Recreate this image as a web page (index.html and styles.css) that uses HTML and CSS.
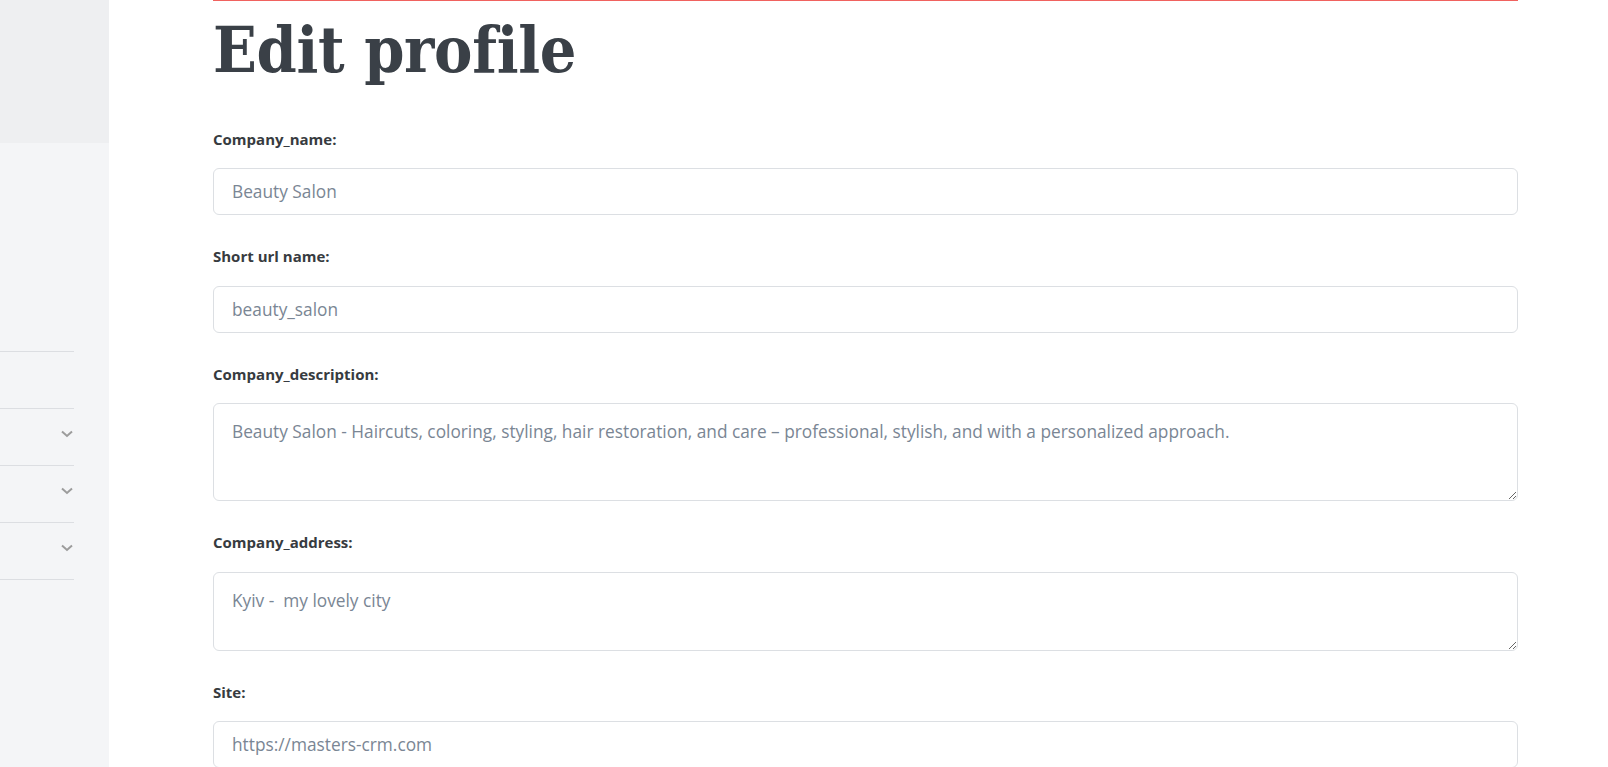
FILE: index.html
```html
<!DOCTYPE html>
<html>
<head>
    <meta charset="utf-8" />
    <title>Edit profile</title>
    <link rel="stylesheet" href="styles.css">
</head>
<body>
    <div class="layout">
        <aside class="sidebar">
            <div class="sidebar-top"></div>
            <ul class="nav">
                <li class="nav-item"></li>
                <li class="nav-item">
                    <svg class="chevron" width="12" height="8" viewBox="0 0 12 8"><path d="M1 1.5 L6 6 L11 1.5" /></svg>
                </li>
                <li class="nav-item">
                    <svg class="chevron" width="12" height="8" viewBox="0 0 12 8"><path d="M1 1.5 L6 6 L11 1.5" /></svg>
                </li>
                <li class="nav-item">
                    <svg class="chevron" width="12" height="8" viewBox="0 0 12 8"><path d="M1 1.5 L6 6 L11 1.5" /></svg>
                </li>
            </ul>
        </aside>

        <main class="main">
            <div class="content">
                <h1 class="title">Edit profile</h1>

                <form class="profile-form">
                    <div class="field">
                        <label class="field-label">Company_name:</label>
                        <input class="field-input" type="text" value="Beauty Salon" />
                    </div>
                    <div class="field">
                        <label class="field-label">Short url name:</label>
                        <input class="field-input" type="text" value="beauty_salon" />
                    </div>
                    <div class="field">
                        <label class="field-label">Company_description:</label>
                        <textarea class="field-input field-area tall">Beauty Salon - Haircuts, coloring, styling, hair restoration, and care – professional, stylish, and with a personalized approach.</textarea>
                    </div>
                    <div class="field">
                        <label class="field-label">Company_address:</label>
                        <textarea class="field-input field-area">Kyiv -  my lovely city</textarea>
                    </div>
                    <div class="field">
                        <label class="field-label">Site:</label>
                        <input class="field-input" type="text" value="https://masters-crm.com" />
                    </div>
                </form>
            </div>
        </main>
    </div>
</body>
</html>
```

FILE: styles.css
```css
html, body
{
    margin: 0;
    height: 100%;
    overflow: hidden;
}

body
{
    font-family: 'Open Sans', sans-serif;
    background: #ffffff;
}

.layout
{
    display: flex;
    height: 100%;
}

.sidebar
{
    width: 109px;
    flex-shrink: 0;
    background: #f4f5f7;
}

.sidebar-top
{
    height: 143px;
    background: #eeeff1;
}

.nav
{
    list-style: none;
    margin: 208px 0 0 0;
    padding: 0;
    width: 74px;
    border-bottom: 1px solid #dcdee2;
}

.nav-item
{
    height: 56px;
    border-top: 1px solid #dcdee2;
    display: flex;
    align-items: center;
    justify-content: flex-end;
    padding-right: 1px;
}

    .nav-item .chevron
    {
        margin-bottom: 6px;
    }

    .nav-item .chevron path
    {
        fill: none;
        stroke: #9c9c9c;
        stroke-width: 2;
    }

.main
{
    flex: 1;
    padding-left: 104px;
}

.content
{
    width: 1305px;
    border-top: 1px solid #f0625f;
}

.title
{
    margin: 11px 0 0 0;
    font: bold 64px/1.2 'DejaVu Serif Condensed', 'DejaVu Serif', serif;
    letter-spacing: -0.3px;
    color: #3a4047;
}

.profile-form
{
    margin-top: 39px;
}

.field
{
    margin-bottom: 30px;
}

.field-label
{
    display: block;
    margin-bottom: 18px;
    font-size: 15px;
    line-height: 1.5;
    font-weight: 700;
    color: #373b40;
}

.field-input
{
    display: block;
    box-sizing: border-box;
    width: 100%;
    height: 47px;
    margin: 0;
    padding: 0 18px;
    border: 1px solid #dcdfe3;
    border-radius: 6px;
    font-family: 'Open Sans', sans-serif;
    font-size: 17.3px;
    line-height: 1.5;
    color: #7a8694;
    background: #ffffff;
    outline: none;
}

.field-area
{
    height: 79px;
    padding: 15px 18px;
    resize: vertical;
}

    .field-area.tall
    {
        height: 98px;
    }
```
